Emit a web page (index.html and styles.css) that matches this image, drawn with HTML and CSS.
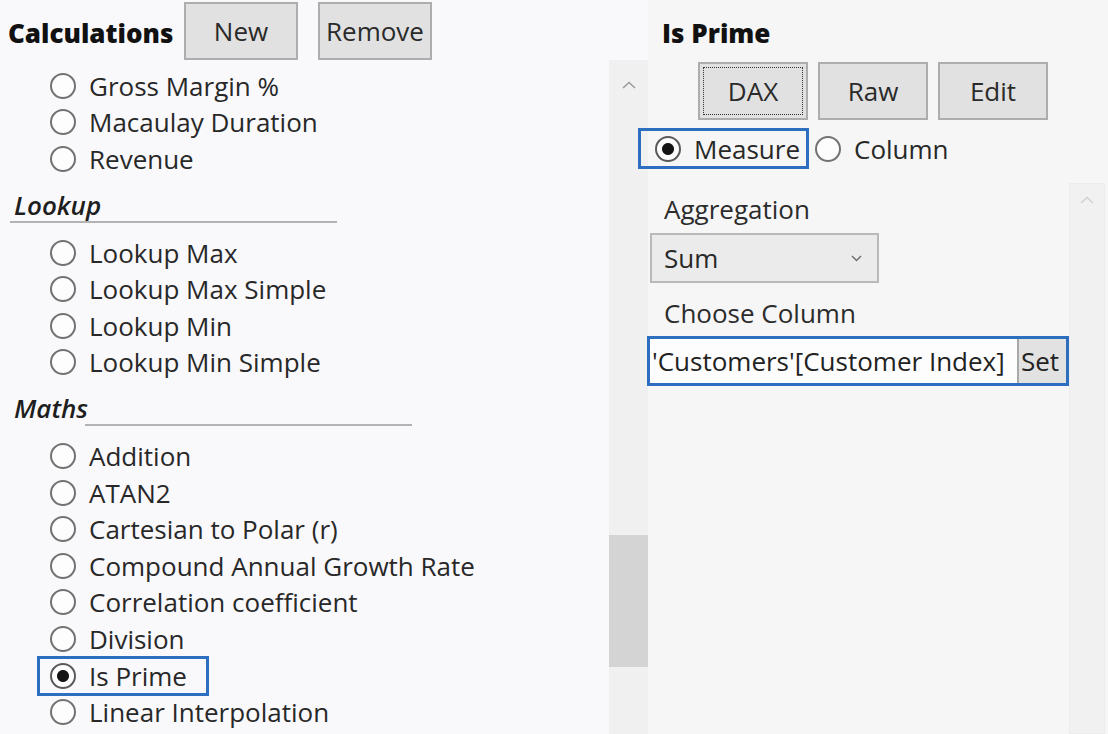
FILE: index.html
```html
<!DOCTYPE html>
<html lang="en">
<head>
<meta charset="utf-8">
<title>Calculations</title>
<link rel="stylesheet" href="styles.css">
</head>
<body>
<div class="app">
  <section class="left">
    <div class="left-head">
      <h1 class="title calc-title">Calculations</h1>
      <button class="btn">New</button>
      <button class="btn btn-remove">Remove</button>
    </div>
    <div class="list">
      <div class="item"><span class="radio"></span><span>Gross Margin %</span></div>
      <div class="item"><span class="radio"></span><span>Macaulay Duration</span></div>
      <div class="item"><span class="radio"></span><span>Revenue</span></div>
      <div class="group">
        <div class="group-title">Lookup</div>
        <div class="group-line line-lookup"></div>
      </div>
      <div class="item"><span class="radio"></span><span>Lookup Max</span></div>
      <div class="item"><span class="radio"></span><span>Lookup Max Simple</span></div>
      <div class="item"><span class="radio"></span><span>Lookup Min</span></div>
      <div class="item"><span class="radio"></span><span>Lookup Min Simple</span></div>
      <div class="group">
        <div class="group-title">Maths</div>
        <div class="group-line line-maths"></div>
      </div>
      <div class="item"><span class="radio"></span><span>Addition</span></div>
      <div class="item"><span class="radio"></span><span>ATAN2</span></div>
      <div class="item"><span class="radio"></span><span>Cartesian to Polar (r)</span></div>
      <div class="item"><span class="radio"></span><span>Compound Annual Growth Rate</span></div>
      <div class="item"><span class="radio"></span><span>Correlation coefficient</span></div>
      <div class="item"><span class="radio"></span><span>Division</span></div>
      <div class="item"><span class="hl-item"><span class="radio checked"></span><span>Is Prime</span></span></div>
      <div class="item"><span class="radio"></span><span>Linear Interpolation</span></div>
      <div class="item"><span class="radio"></span></div>
    </div>
  </section>

  <div class="vscroll">
    <svg class="chev-up" width="14" height="8" viewBox="0 0 14 8"><path d="M1 7 L7 1.5 L13 7" fill="none" stroke="#9c9c9c" stroke-width="1.6"/></svg>
    <div class="thumb" style="margin-top:446px"></div>
  </div>

  <section class="right">
    <div class="right-head">
      <h2 class="title">Is Prime</h2>
    </div>
    <div class="mode-btns">
      <button class="btn btn-mode btn-focus">DAX</button>
      <button class="btn btn-mode">Raw</button>
      <button class="btn btn-mode">Edit</button>
    </div>
    <div class="kind-row">
      <span class="kind hl-kind"><span class="radio checked"></span><span>Measure</span></span>
      <span class="kind kind-col"><span class="radio"></span><span>Column</span></span>
    </div>
    <div class="props">
      <div class="props-body">
        <div class="label">Aggregation</div>
        <div class="combo">
          <span>Sum</span>
          <svg width="11" height="7" viewBox="0 0 11 7"><path d="M1 1 L5.5 5.5 L10 1" fill="none" stroke="#707070" stroke-width="1.5"/></svg>
        </div>
        <div class="label label-col">Choose Column</div>
        <div class="colbox">
          <div class="textbox">'Customers'[Customer Index]</div>
          <div class="set">Set</div>
        </div>
      </div>
      <div class="props-scroll">
        <svg class="chev-up-faint" width="14" height="8" viewBox="0 0 14 8"><path d="M1 7 L7 1.5 L13 7" fill="none" stroke="#d2d2d2" stroke-width="1.6"/></svg>
      </div>
    </div>
  </section>
</div>
</body>
</html>
```

FILE: styles.css
```css
html, body {
  margin: 0;
  padding: 0;
}

body {
  width: 1108px;
  height: 734px;
  overflow: hidden;
  background: #f9f9fc;
  font-family: "Open Sans", "Noto Sans", "Liberation Sans", sans-serif;
  font-size: 26px;
  color: #282828;
}

.app {
  display: flex;
  height: 734px;
}

/* ---------- left panel ---------- */
.left {
  width: 609px;
  flex: none;
  background: #f9f9fc;
  overflow: hidden;
}

.left-head {
  display: flex;
  align-items: center;
  height: 58px;
  margin-top: 2px;
  padding-left: 8px;
}

.title {
  margin: 0;
  font-size: 26px;
  font-weight: 800;
  line-height: 36px;
  padding-top: 4px;
  color: #111;
  white-space: nowrap;
}

.calc-title {
  flex: 0 0 176px;
}

.btn {
  font-family: inherit;
  font-size: 26px;
  color: #2a2a2a;
  background: #e1e1e1;
  border: 2px solid #adadad;
  height: 58px;
  width: 114px;
  padding: 0;
  margin: 0;
  box-sizing: border-box;
  line-height: 1;
}

.btn-remove {
  margin-left: 20px;
}

.list {
  padding-top: 7.6px;
}

.item {
  display: flex;
  align-items: center;
  height: 36.6px;
  padding-left: 50px;
  white-space: nowrap;
  line-height: 36px;
}

.radio {
  flex: none;
  width: 26px;
  height: 26px;
  box-sizing: border-box;
  border: 2px solid #727272;
  border-radius: 50%;
  background: #fdfdfd;
  margin-right: 13px;
}

.radio.checked {
  border-color: #5a5a5a;
  background: radial-gradient(circle, #141414 0 5.5px, #fdfdfd 6.5px);
}

.hl-item {
  display: flex;
  align-items: center;
  height: 40px;
  box-sizing: border-box;
  border: 3px solid #2e6ebf;
  margin-left: -13px;
  padding: 0 19px 0 10px;
}

.group {
  height: 57px;
  box-sizing: border-box;
  padding-top: 11.6px;
}

.group-title {
  padding-left: 14px;
  font-style: italic;
  font-weight: 600;
  line-height: 32px;
  color: #1e1e1e;
}

.group-line {
  height: 2px;
  width: 327px;
  background: #b3b3b3;
}

.line-lookup {
  margin-left: 10px;
}

.line-maths {
  margin-left: 85px;
}

/* ---------- scrollbar of list ---------- */
.vscroll {
  width: 39px;
  flex: none;
  margin-top: 60px;
  background: #f0f0f0;
  display: flex;
  flex-direction: column;
  align-items: center;
}

.chev-up {
  margin-top: 21px;
  flex: none;
}

.thumb {
  align-self: stretch;
  height: 132px;
  background: #d4d4d4;
  flex: none;
}

/* ---------- right panel ---------- */
.right {
  flex: 1;
  background: #f6f6f6;
  display: flex;
  flex-direction: column;
  min-width: 0;
}

.right-head {
  height: 58px;
  margin-top: 2px;
  padding-left: 14px;
  display: flex;
  align-items: center;
}

.mode-btns {
  display: flex;
  gap: 10px;
  margin-top: 2px;
  padding-left: 50px;
}

.btn-mode {
  width: 110px;
}

.btn-focus {
  outline: 1.5px dotted #333;
  outline-offset: -6px;
}

.kind-row {
  display: flex;
  align-items: center;
  margin-top: 8px;
  height: 41px;
  margin-bottom: 14px;
  white-space: nowrap;
}

.kind {
  display: flex;
  align-items: center;
}

.kind .radio {
  margin-right: 13px;
}

.hl-kind {
  margin-left: -10px;
  width: 171px;
  height: 41px;
  box-sizing: border-box;
  border: 3px solid #2e6ebf;
  padding-left: 14px;
}

.kind-col {
  margin-left: 6px;
}

.props {
  flex: 1;
  display: flex;
}

.props-body {
  flex: 1;
  padding-top: 8px;
}

.label {
  padding-left: 16px;
  line-height: 36px;
  color: #2c2c2c;
}

.label-col {
  margin-top: 12px;
}

.combo {
  margin-top: 6px;
  margin-left: 2px;
  width: 229px;
  height: 50px;
  box-sizing: border-box;
  border: 2px solid #b9b9b9;
  background: #ebebeb;
  display: flex;
  align-items: center;
  justify-content: space-between;
  padding: 0 15px 0 12px;
}

.colbox {
  margin-top: 5px;
  margin-left: -1px;
  width: 422px;
  height: 50px;
  box-sizing: border-box;
  border: 3px solid #2e6ebf;
  display: flex;
}

.textbox {
  flex: 1;
  background: #fdfdfd;
  padding-left: 2px;
  line-height: 44px;
  white-space: nowrap;
  overflow: hidden;
  color: #222;
}

.set {
  width: 49px;
  flex: none;
  background: #e2e2e2;
  border-left: 2px solid #a8a8a8;
  box-sizing: border-box;
  line-height: 44px;
  padding-left: 2px;
  color: #222;
}

.props-scroll {
  width: 40px;
  margin-right: 3px;
  background: #f1f1f1;
  border: 1px solid #ececec;
  box-sizing: border-box;
  display: flex;
  flex-direction: column;
  align-items: center;
}

.chev-up-faint {
  margin-top: 12px;
}
```
